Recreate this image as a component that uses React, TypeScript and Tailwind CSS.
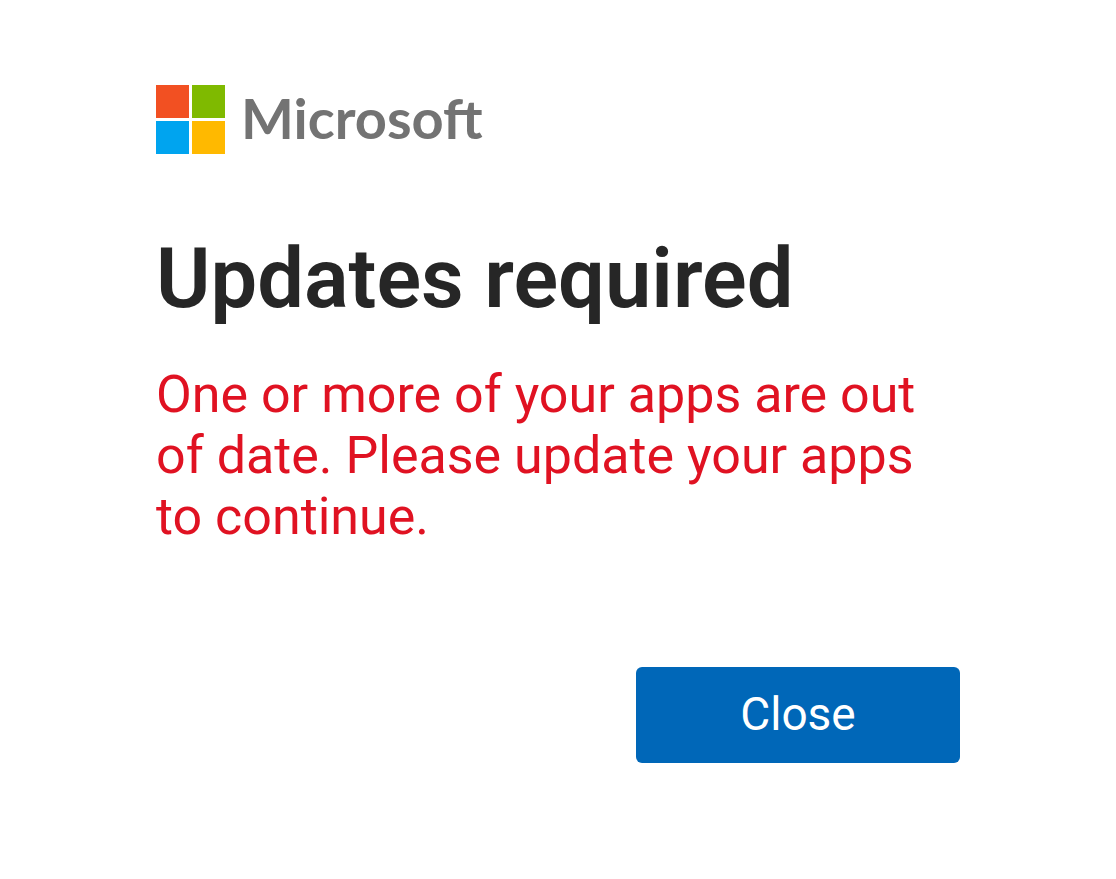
import React from 'react';

const MicrosoftLogo = () => {
  return (
    <div className="flex items-center gap-4">
      <svg className="h-[69px] w-[69px]" viewBox="0 0 69 69" aria-hidden="true">
        <rect x="0" y="0" width="33" height="33" fill="#f25022" />
        <rect x="36" y="0" width="33" height="33" fill="#7fba00" />
        <rect x="0" y="36" width="33" height="33" fill="#00a4ef" />
        <rect x="36" y="36" width="33" height="33" fill="#ffb900" />
      </svg>
      <span className="pb-1 font-[Lato,sans-serif] text-[56px] leading-[65px] font-bold text-[#737373]">
        Microsoft
      </span>
    </div>
  );
};

const App = () => {
  return (
    <main className="min-h-screen bg-white px-[156px] pt-[85px] pb-[116px] font-[Roboto,sans-serif]">
      <MicrosoftLogo />

      <h1 className="mt-[75px] text-[83px] leading-[100px] font-semibold text-[#262626]">
        Updates required
      </h1>

      <p className="mt-[35px] text-[52px] leading-[61px] text-[#e01222]">
        One or more of your apps are out of date. Please update your apps to continue.
      </p>

      <div className="mt-[120px] flex justify-end">
        <button
          type="button"
          className="h-24 w-[324px] rounded-md bg-[#0067b8] pb-0.5 text-[46px] text-white"
        >
          Close
        </button>
      </div>
    </main>
  );
};

export default App;
